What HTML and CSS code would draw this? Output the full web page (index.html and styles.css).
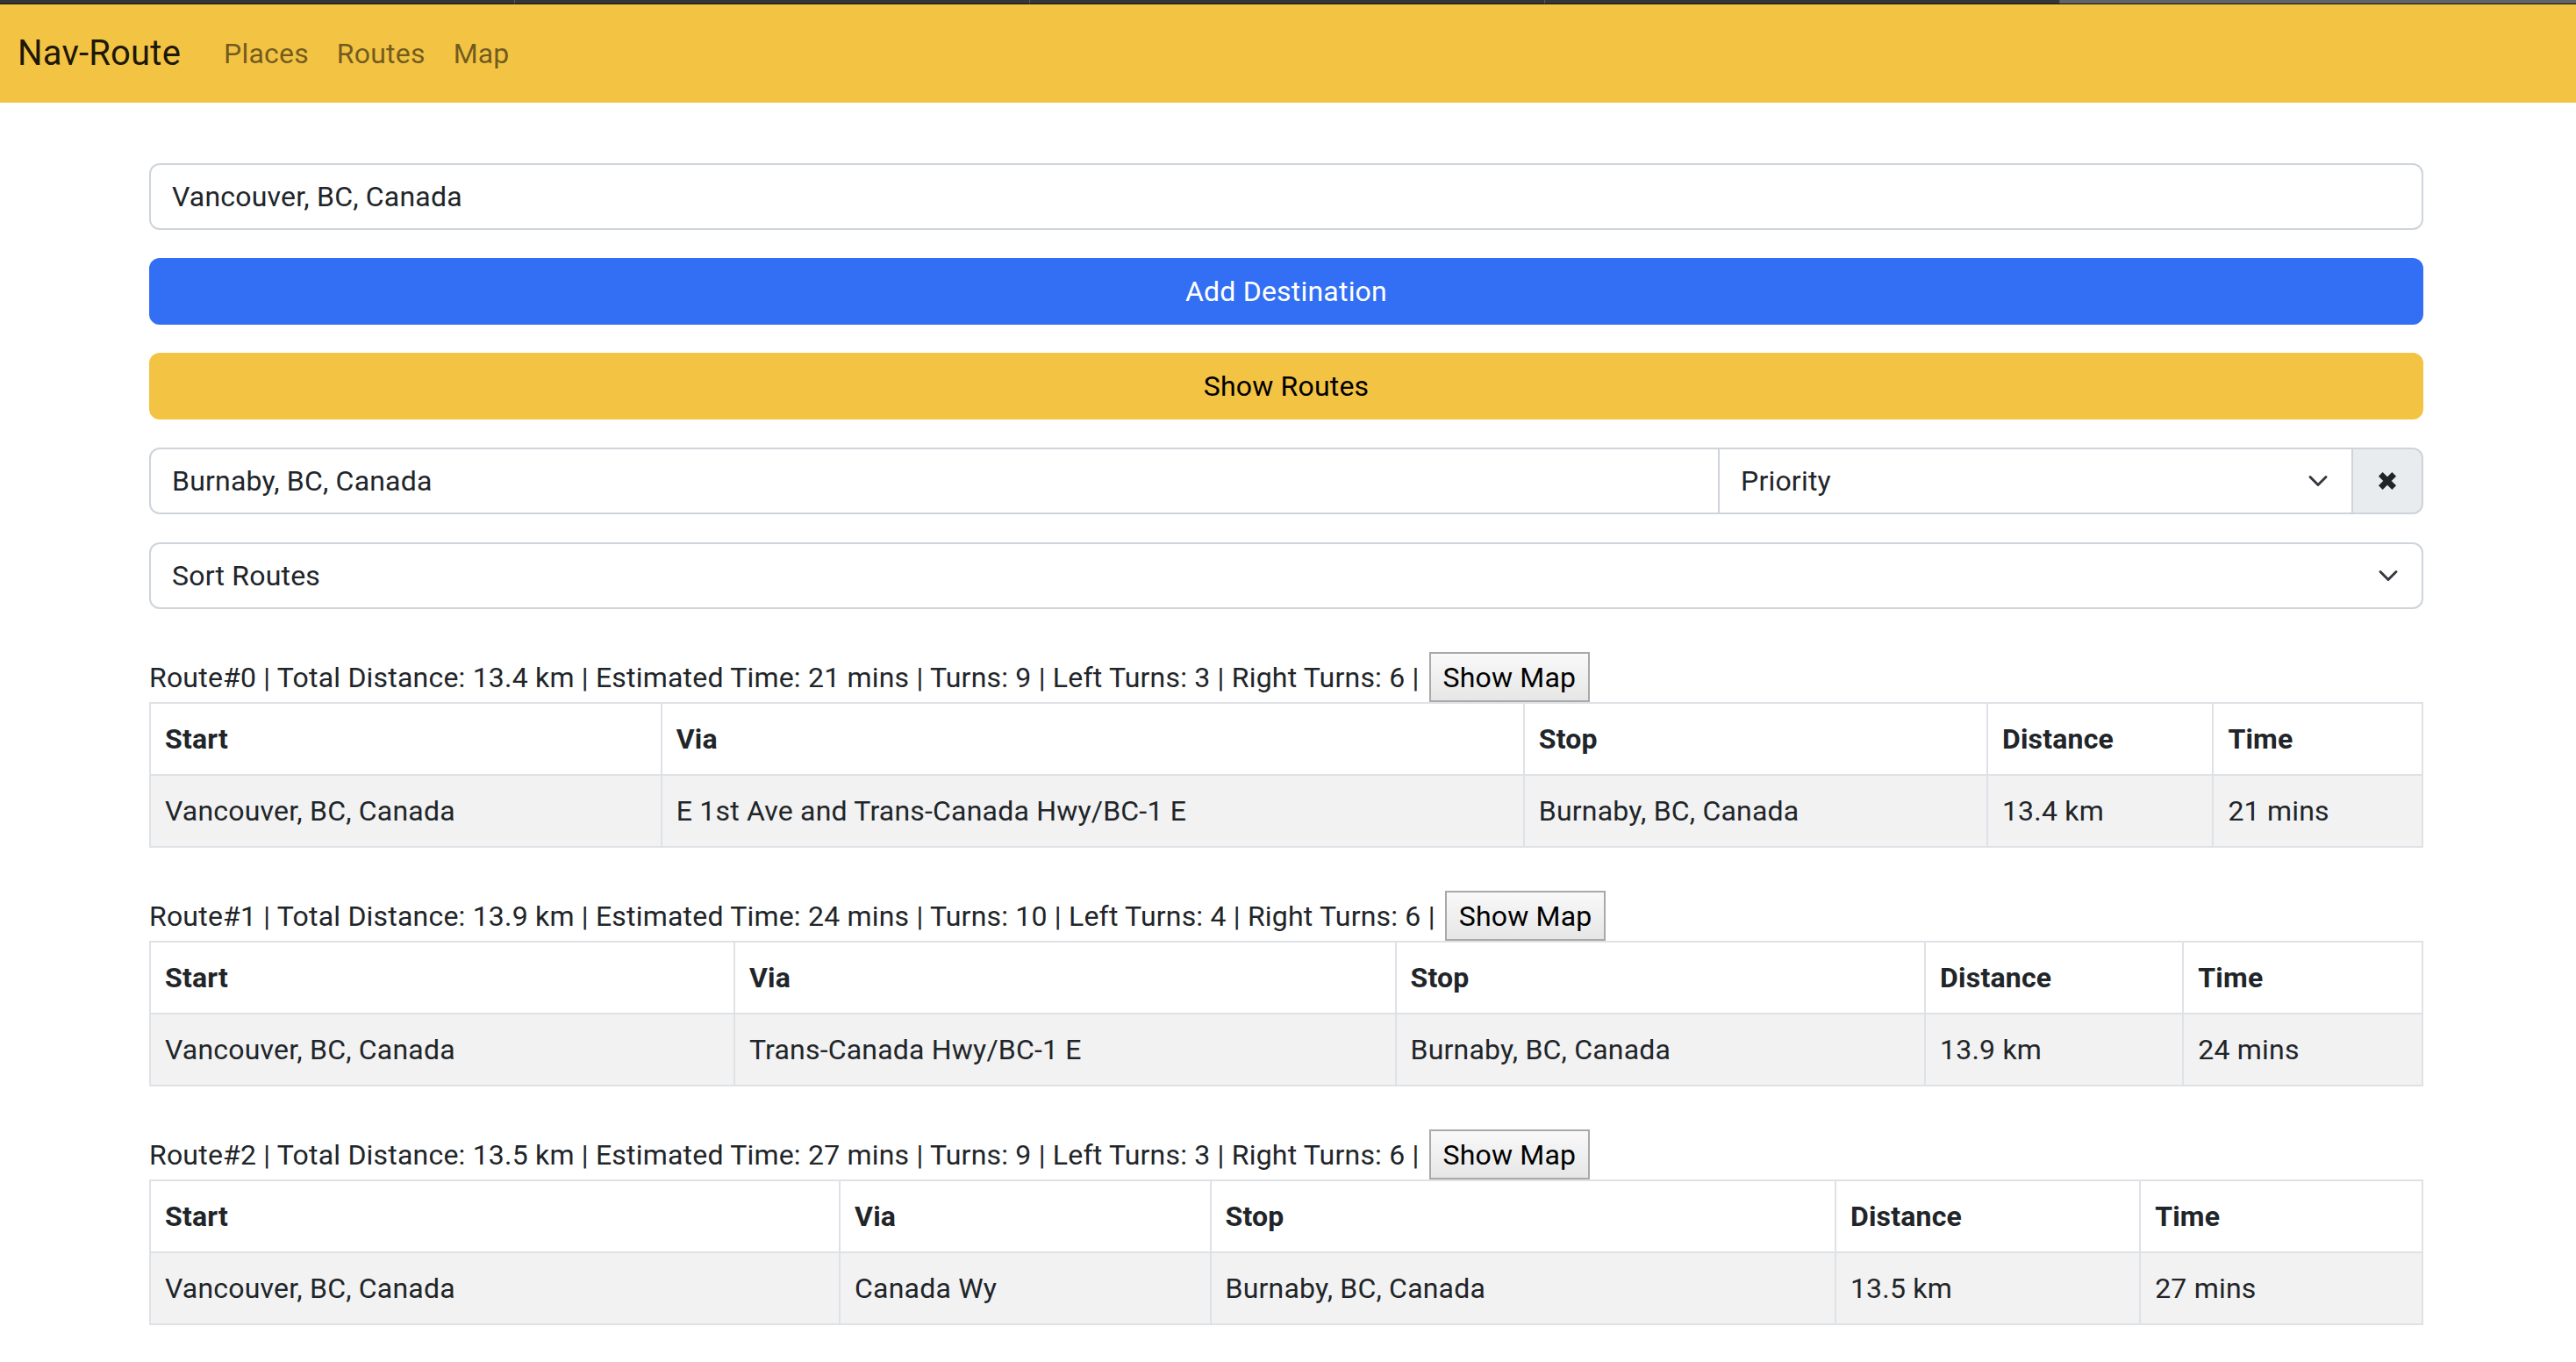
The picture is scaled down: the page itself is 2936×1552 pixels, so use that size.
FILE: index.html
```html
<!DOCTYPE html>
<html lang="en">
<head>
<meta charset="utf-8">
<title>Nav-Route</title>
<link rel="stylesheet" href="styles.css">
</head>
<body>
<div class="tabstrip">
  <span class="tab"></span><span class="tab"></span><span class="tab"></span><span class="tab"></span><span class="tab tab-active"></span>
</div>
<nav class="navbar">
  <a class="brand" href="#">Nav-Route</a>
  <ul class="nav">
    <li><a class="nav-link" href="#">Places</a></li>
    <li><a class="nav-link" href="#">Routes</a></li>
    <li><a class="nav-link" href="#">Map</a></li>
  </ul>
</nav>
<main class="container">
  <div class="form-control">Vancouver, BC, Canada</div>
  <button class="btn btn-primary">Add Destination</button>
  <button class="btn btn-warning">Show Routes</button>
  <div class="input-group">
    <div class="form-control grow joined-left">Burnaby, BC, Canada</div>
    <div class="form-select priority joined-mid">
      <span>Priority</span>
      <svg class="chevron" viewBox="0 0 16 16" width="32" height="24"><path d="m2 5 6 6 6-6" fill="none" stroke="#343a40" stroke-width="2" stroke-linecap="round" stroke-linejoin="round"/></svg>
    </div>
    <span class="input-group-text joined-right">
      <svg class="xmark" viewBox="0 0 20 20" width="22" height="22"><path d="M3 3 L17 17 M17 3 L3 17" stroke="#212529" stroke-width="6" stroke-linecap="butt"/></svg>
    </span>
  </div>
  <div class="form-select">
    <span>Sort Routes</span>
    <svg class="chevron" viewBox="0 0 16 16" width="32" height="24"><path d="m2 5 6 6 6-6" fill="none" stroke="#343a40" stroke-width="2" stroke-linecap="round" stroke-linejoin="round"/></svg>
  </div>

  <section class="route">
    <div class="route-info"><span>Route#0 | Total Distance: 13.4 km | Estimated Time: 21 mins | Turns: 9 | Left Turns: 3 | Right Turns: 6 |</span><button class="map-btn">Show Map</button></div>
    <table class="table">
      <thead><tr><th>Start</th><th>Via</th><th>Stop</th><th>Distance</th><th>Time</th></tr></thead>
      <tbody><tr><td>Vancouver, BC, Canada</td><td>E 1st Ave and Trans-Canada Hwy/BC-1 E</td><td>Burnaby, BC, Canada</td><td>13.4 km</td><td>21 mins</td></tr></tbody>
    </table>
  </section>

  <section class="route">
    <div class="route-info"><span>Route#1 | Total Distance: 13.9 km | Estimated Time: 24 mins | Turns: 10 | Left Turns: 4 | Right Turns: 6 |</span><button class="map-btn">Show Map</button></div>
    <table class="table">
      <thead><tr><th>Start</th><th>Via</th><th>Stop</th><th>Distance</th><th>Time</th></tr></thead>
      <tbody><tr><td>Vancouver, BC, Canada</td><td>Trans-Canada Hwy/BC-1 E</td><td>Burnaby, BC, Canada</td><td>13.9 km</td><td>24 mins</td></tr></tbody>
    </table>
  </section>

  <section class="route">
    <div class="route-info"><span>Route#2 | Total Distance: 13.5 km | Estimated Time: 27 mins | Turns: 9 | Left Turns: 3 | Right Turns: 6 |</span><button class="map-btn">Show Map</button></div>
    <table class="table">
      <thead><tr><th>Start</th><th>Via</th><th>Stop</th><th>Distance</th><th>Time</th></tr></thead>
      <tbody><tr><td>Vancouver, BC, Canada</td><td>Canada Wy</td><td>Burnaby, BC, Canada</td><td>13.5 km</td><td>27 mins</td></tr></tbody>
    </table>
  </section>
</main>
</body>
</html>
```

FILE: styles.css
```css
* { box-sizing: border-box; }

html, body {
  margin: 0;
  background: #ffffff;
  font-family: Roboto, "Liberation Sans", Arial, sans-serif;
  font-size: 32px;
  line-height: 48px;
  letter-spacing: 0.2px;
  color: #212529;
}

.tabstrip {
  display: flex;
  height: 5px;
  background: #363636;
  border-bottom: 1px solid #111111;
}
.tab {
  flex: 0 0 587px;
  border-right: 1px solid #5a5a5a;
}
.tab-active {
  flex: 1 1 auto;
  background: #646464;
  border-right: 0;
}

.navbar {
  display: flex;
  align-items: center;
  height: 112px;
  padding: 0 20px;
  background: #f3c343;
}
.brand {
  font-size: 40px;
  line-height: 60px;
  letter-spacing: 0.2px;
  color: rgba(0, 0, 0, 0.9);
  text-decoration: none;
  margin-right: 33px;
}
.nav {
  display: flex;
  list-style: none;
  margin: 0;
  padding: 0;
}
.nav-link {
  display: block;
  padding: 16px;
  color: rgba(0, 0, 0, 0.55);
  text-decoration: none;
}

.container {
  width: 2592px;
  margin: 69px 0 0 170px;
  display: flex;
  flex-direction: column;
  padding-bottom: 40px;
}

.form-control,
.form-select {
  height: 76px;
  padding: 12px 24px;
  border: 2px solid #ced4da;
  border-radius: 12px;
  background: #ffffff;
  color: #212529;
  display: flex;
  align-items: center;
}
.form-select {
  justify-content: space-between;
  margin-top: 32px;
}
.chevron { display: block; margin-right: -2px; }

.btn {
  display: block;
  width: 100%;
  height: 76px;
  margin-top: 32px;
  border: 2px solid transparent;
  border-radius: 12px;
  font: inherit;
  letter-spacing: inherit;
  text-align: center;
  cursor: pointer;
}
.btn-primary {
  background: #336ff4;
  border-color: #336ff4;
  color: #ffffff;
}
.btn-warning {
  background: #f3c343;
  border-color: #f3c343;
  color: #000000;
}

.input-group {
  display: flex;
  margin-top: 32px;
}
.input-group .form-select { margin-top: 0; }
.grow { flex: 1 1 auto; }
.priority { flex: 0 0 724px; }
.joined-left { border-radius: 12px 0 0 12px; }
.joined-mid { border-radius: 0; margin-left: -2px; }
.joined-right { border-radius: 0 12px 12px 0; margin-left: -2px; }
.input-group-text {
  display: flex;
  align-items: center;
  justify-content: center;
  width: 82px;
  height: 76px;
  background: #e9ecef;
  border: 2px solid #ced4da;
}

.route { margin-top: 49px; }
.route-info {
  display: flex;
  align-items: center;
  gap: 11px;
}
.map-btn {
  height: 57px;
  padding: 0 14px;
  font: inherit;
  letter-spacing: inherit;
  color: #000000;
  background: linear-gradient(#f9f9f9, #e6e6e6);
  border: 2px solid #a9a9a9;
  border-radius: 0;
}

.table {
  width: 100%;
  border-collapse: collapse;
  border: 2px solid #dee2e6;
}
.table th,
.table td {
  padding: 16px;
  text-align: left;
  vertical-align: top;
  border: 2px solid #dee2e6;
}
.table th { font-weight: 700; background: #ffffff; }
.table td { background: #f2f2f2; }
```
